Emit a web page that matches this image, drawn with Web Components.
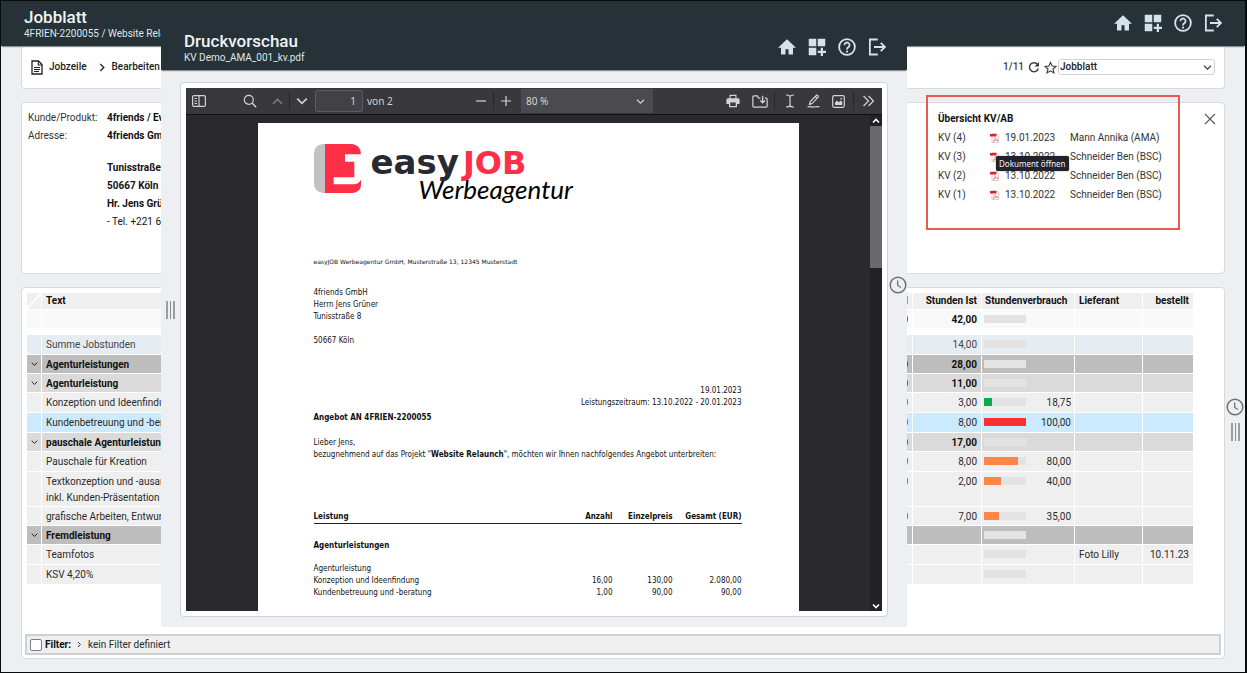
<!DOCTYPE html>
<html lang="de">
<head>
<meta charset="utf-8">
<meta name="viewport" content="width=device-width, initial-scale=1">
<title>Jobblatt – Druckvorschau</title>
<style>
  body { margin: 0; font: 10px/16px Roboto, "Liberation Sans", sans-serif; color: #2b2b2b; background: #edeff2; }
</style>
</head>
<body>
<app-frame>
  <app-header slot="header" heading="Jobblatt" subline="4FRIEN-2200055 / Website Relaunch"></app-header>
  <ui-card class="top"><job-toolbar></job-toolbar></ui-card>
  <ui-card class="info"><customer-info></customer-info><kv-overview></kv-overview></ui-card>
  <ui-card class="grow"><job-table></job-table><filter-bar></filter-bar></ui-card>
  <preview-dialog slot="dialog"></preview-dialog>
</app-frame>

<script>
/* Registers an element whose shadow root is cloned from a template. */
function define(name, css, html) {
  const tpl = document.createElement('template');
  tpl.innerHTML = `<style>*{box-sizing:border-box}button{border:0;background:none;padding:0;margin:0;color:inherit;font:inherit;display:grid;place-items:center}${css}</style>`;
  customElements.define(name, class extends HTMLElement {
    constructor() {
      super();
      const root = this.attachShadow({ mode: 'open' });
      root.append(tpl.content.cloneNode(true));
      const body = document.createElement('template');
      body.innerHTML = typeof html === 'function' ? html(this) : html;
      root.append(body.content);
    }
  });
}

const line = 'fill="none" stroke="currentColor"';
const ICONS = {
  home: ['0 0 24 24', '<path fill="currentColor" d="M10 22v-7h4v7h6v-9h4L12 1.500 0 13h4v9z"/>'],
  apps: ['0 0 24 24', '<path fill="currentColor" d="M1 1h10v10H1zM13 1h10v10H13zM1 13h10v10H1zM17 13h3v4h4v3h-4v4h-3v-4h-4v-3h4z"/>'],
  help: ['0 0 24 24', `<circle cx="12" cy="12" r="10.500" ${line} stroke-width="2.400"/><path ${line} stroke-width="2.400" d="M8.600 9.500a3.400 3.400 0 1 1 5.400 2.700c-1.300 1-2 1.400-2 3"/><circle cx="12" cy="18" r="1.500" fill="currentColor"/>`],
  exit: ['0 0 24 24', `<path ${line} stroke-width="2.400" d="M13 2H2.500v20H13M8 12h14M17 6.500l5.500 5.500-5.500 5.500"/>`],
  doc: ['0 0 12 15', `<path ${line} stroke-width="1.300" d="M1 1h6.500L11 4.500V14H1z"/><path ${line} stroke-width="1.100" d="M7.300 1v4H11M3 7.500h6M3 9.500h6M3 11.500h5"/>`],
  right: ['0 0 8 10', `<path ${line} stroke-width="1.500" d="M1.500 1l4 4-4 4"/>`],
  down: ['0 0 10 8', `<path ${line} stroke-width="1.300" d="M1 2l4 4 4-4"/>`],
  up: ['0 0 10 8', `<path ${line} stroke-width="1.300" d="M1 6l4-4 4 4"/>`],
  downBold: ['0 0 10 8', `<path ${line} stroke-width="2.200" d="M1 2l4 4 4-4"/>`],
  upBold: ['0 0 10 8', `<path ${line} stroke-width="2.200" d="M1 6l4-4 4 4"/>`],
  reload: ['0 0 12 12', `<path ${line} stroke-width="1.400" d="M9.800 3.800A4.500 4.500 0 1 0 10.300 7.500"/><path fill="currentColor" d="M11 1v4.500H6.500z"/>`],
  star: ['0 0 14 14', `<path ${line} stroke-width="1.200" d="M7 1.500l1.700 3.900 4.200.4-3.200 2.800 1 4.200L7 10.600l-3.700 2.200 1-4.200L1.100 5.800l4.200-.4z"/>`],
  close: ['0 0 12 12', `<path ${line} stroke-width="1.100" d="M1 1l10 10M11 1L1 11"/>`],
  clock: ['0 0 18 18', `<circle cx="9" cy="9" r="7.800" ${line} stroke-width="1.500"/><path ${line} stroke-width="1.300" d="M8.700 4.500V9.500L12 11.500"/>`],
  pdf: ['0 0 9 10', '<path fill="#fff" stroke="#e3bcbc" stroke-width=".8" d="M2 .5h4.500l2 2v7H2z"/><path fill="#d22630" d="M0 1h6.500v2.500H0z"/><path fill="none" stroke="#df7b80" stroke-width=".8" d="M3 8.500c1.500-1 2-2.500 2-4 .3 1.600 1.500 2.500 3 2.700-1.700 0-3.500.3-5 1.300z"/>'],
  sidebar: ['0 0 14 12', `<rect x=".6" y=".6" width="12.800" height="10.800" rx="1.500" ${line} stroke-width="1.200"/><path ${line} stroke-width="1.200" d="M7 1v10M2.500 3.500H5M2.500 6H5M2.500 8.500H5"/>`],
  search: ['0 0 14 14', `<circle cx="5.800" cy="5.800" r="4.500" ${line} stroke-width="1.200"/><path ${line} stroke-width="1.300" d="M9 9l4.200 4.200"/>`],
  minus: ['0 0 12 12', `<path ${line} stroke-width="1.200" d="M1 6h10"/>`],
  plus: ['0 0 12 12', `<path ${line} stroke-width="1.200" d="M1 6h10M6 1v10"/>`],
  print: ['0 0 14 14', '<path fill="currentColor" fill-rule="evenodd" d="M3.500.8h7v3.400H12a1.600 1.600 0 0 1 1.600 1.600V10H11v3.200H3V10H.4V5.800A1.600 1.600 0 0 1 2 4.200h1.500zM4.600 2v2.200h4.800V2zM4.300 8.600v3.300h5.400V8.600z"/>'],
  save: ['0 0 15 12', `<path ${line} stroke-width="1.100" d="M8 2.800H6.200L5 .8H1.800a1 1 0 0 0-1 1v8.400a1 1 0 0 0 1 1h11.400a1 1 0 0 0 1-1V3.800a1 1 0 0 0-1-1H12"/><path ${line} stroke-width="1.200" d="M10 .5v6.700M7.800 5l2.200 2.200L12.200 5"/>`],
  text: ['0 0 10 14', `<path ${line} stroke-width="1.200" d="M1 1c2.500 0 4 .3 4 2v8c0 1.700-1.500 2-4 2M9 1C6.500 1 5 1.300 5 3v8c0 1.700 1.500 2 4 2"/>`],
  pen: ['0 0 14 14', `<path ${line} stroke-width="1.200" d="M2.500 10.500l.8-3L9.500 1.300c.8-.7 2.500 1 1.700 1.800L5 9.600zM8.300 2.500l1.800 1.800M.5 13c3-1 4 .4 6 0s3-.6 6-.2"/>`],
  image: ['0 0 13 13', `<rect x=".7" y=".7" width="11.600" height="11.600" rx="1.500" ${line} stroke-width="1.200"/><path fill="currentColor" d="M3 10V7.500l2-2 1.800 1.700L9 5.500l1.300 1.500V10zM8.500 3h1.500v1.500H8.500z"/>`],
  more: ['0 0 13 12', `<path ${line} stroke-width="1.200" d="M1.500 1l5 5-5 5M6.500 1l5 5-5 5"/>`]
};
const icon = (name, w, h = w) => `<svg width="${w}" height="${h}" viewBox="${ICONS[name][0]}" aria-hidden="true" style="display:block;flex:none">${ICONS[name][1]}</svg>`;

define('app-frame', `
  :host { display: flex; flex-direction: column; min-height: 100vh; position: relative; box-sizing: border-box;
    border: 1px solid #0a0b0d; border-right-width: 2px; background: #edeff2; overflow: hidden; }
  .row { flex: 1; display: flex; }
  main { flex: 1; min-width: 0; display: flex; flex-direction: column; gap: 13px; padding: 0 0 13px 20px; }
  ::slotted([slot=dialog]) { position: absolute; top: 24px; left: 160px; right: 338px; bottom: 45px; }`,
  `<slot name="header"></slot>
   <div class="row"><main><slot></slot></main><side-rail style="padding-top:352px" clock grip></side-rail></div>
   <slot name="dialog"></slot>`);

define('side-rail', `
  :host { display: flex; flex: none; flex-direction: column; align-items: center; gap: 7px; width: 20px; color: #6f7176; box-sizing: border-box; }
  .grip { width: 9px; height: 18px; border: solid #9a9ca0; border-width: 0 2px; display: grid; justify-content: center; }
  .grip i { width: 1px; background: #8b8d91; }`,
  el => (el.hasAttribute('clock') ? `<button type="button" aria-label="Zeiterfassung">${icon('clock', 18)}</button>` : '') +
        (el.hasAttribute('grip') ? '<div class="grip"><i></i></div>' : ''));

define('app-header', `
  :host { display: flex; flex: none; height: 45px; box-sizing: border-box; padding: 6px 20px 0 23px; justify-content: space-between;
    background: #263238; color: #eef3f5; box-shadow: 0 2px 1px -1px #8a8d90; position: relative; z-index: 1; }
  h1 { margin: 0; font-size: 17px; line-height: 20px; font-weight: 500; }
  p { margin: 0; font-size: 10px; line-height: 14px; white-space: nowrap; color: #dfe6e9; }
  nav { display: flex; gap: 6px; height: 32px; align-items: center; color: #d5e2ea; }
  nav button { width: 24px; height: 24px; }`,
  el => `<div><h1>${el.getAttribute('heading')}</h1><p>${el.getAttribute('subline')}</p></div>
   <nav><button type="button" aria-label="Start">${icon('home', 18)}</button><button type="button" aria-label="Apps">${icon('apps', 18)}</button>
   <button type="button" aria-label="Hilfe">${icon('help', 18)}</button><button type="button" aria-label="Abmelden">${icon('exit', 18)}</button></nav>`);

define('ui-card', `
  :host { display: flex; flex: none; box-sizing: border-box; background: #fff; border: 1px solid #d8dadd; border-radius: 4px; }
  :host(.top) { border-top: 0; border-radius: 0 0 4px 4px; height: 43px; align-items: center; }
  :host(.info) { min-height: 172px; justify-content: space-between; }
  :host(.grow) { flex: 1; flex-direction: column; justify-content: space-between; padding: 3px; }
  ::slotted(job-toolbar) { flex: 1; }`, '<slot></slot>');

define('job-toolbar', `
  :host { display: flex; justify-content: space-between; align-items: center; padding: 0 9px; font-weight: 500; }
  div { display: flex; align-items: center; }
  a { display: flex; align-items: center; gap: 6px; color: #222; text-decoration: none; }
  .right { gap: 1px; color: #37393c; }
  .state { gap: 4px; }
  .pick { position: relative; }
  .pick svg { position: absolute; right: 3px; top: 5px; pointer-events: none; }
  select { appearance: none; display: block; width: 157px; height: 16px; border: 1px solid #cfd1d4; border-radius: 3px; background: #fff; color: #222; font: inherit; line-height: 14px; padding: 0 1px; }`,
  `<div style="gap:12px"><a href="#jobzeile">${icon('doc', 12, 15)}Jobzeile</a><a href="#bearbeiten">${icon('right', 7, 9)}Bearbeiten</a></div>
   <div class="right"><div class="state"><span>1/11</span><button type="button" aria-label="Neu laden">${icon('reload', 12)}</button>
   <button type="button" aria-label="Favorit">${icon('star', 13)}</button></div>
   <span class="pick"><select aria-label="Ansicht"><option>Jobblatt</option></select>${icon('down', 9, 7)}</span></div>`);

define('customer-info', `
  :host { display: block; padding: 6px; }
  dl { display: grid; grid-template-columns: 79px auto; margin: 0; line-height: 18px; white-space: nowrap; }
  dt { color: #333; } dd { margin: 0; font-weight: 700; color: #111; }
  p { margin: 0; } .addr { padding-top: 14px; grid-column: 2; } .tel { font-weight: 400; }`,
  `<dl><dt>Kunde/Produkt:</dt><dd>4friends / Event</dd><dt>Adresse:</dt><dd>4friends GmbH</dd>
   <dd class="addr"><p>Tunisstraße 8</p><p>50667 Köln</p><p>Hr. Jens Grüner</p><p class="tel">- Tel. +221 6</p></dd></dl>`);

define('kv-overview', `
  :host { display: flex; align-items: flex-start; gap: 24px; padding: 6px 8px 0 0; color: #333; }
  section { position: relative; width: 254px; padding-left: 12px; }
  .mark { position: absolute; left: 0; right: 0; top: -14px; height: 135px; border: 2px solid #ea5a50; pointer-events: none; }
  h2 { margin: 0; font-size: 10px; line-height: 19px; font-weight: 700; color: #111; }
  table { border-spacing: 0; table-layout: fixed; width: 100%; }
  td { padding: 0; height: 19px; line-height: 19px; white-space: nowrap; }
  .tip { position: absolute; left: 70px; top: 47px; padding: 0 3px; background: #23212b; color: #f0f0f2; border-radius: 2px; font: 8px/15px "Noto Sans", sans-serif; white-space: nowrap; box-shadow: 0 0 1px #000; }
  .x { width: 12px; height: 20px; color: #55585c; }`,
  `<section><div class="mark"></div><h2>Übersicht KV/AB</h2>
   <table><colgroup><col style="width:52px"><col style="width:15px"><col style="width:65px"><col></colgroup><tbody>` +
   [['KV (4)', '19.01.2023', 'Mann Annika (AMA)'], ['KV (3)', '13.10.2022', 'Schneider Ben (BSC)'], ['KV (2)', '13.10.2022', 'Schneider Ben (BSC)'], ['KV (1)', '13.10.2022', 'Schneider Ben (BSC)']]
     .map(r => `<tr><td>${r[0]}</td><td><button type="button" aria-label="Dokument öffnen">${icon('pdf', 9, 10)}</button></td><td>${r[1]}</td><td>${r[2]}</td></tr>`).join('') +
   `</tbody></table><div class="tip" role="tooltip">Dokument öffnen</div></section>
   <button class="x" type="button" aria-label="Schließen">${icon('close', 12)}</button>`);

/* kind, text, planned hours, actual hours, usage share, bar colour, supplier, ordered */
const JOB_ROWS = [
  ['sum', 'Summe Jobstunden', '', '14,00'],
  ['dark', 'Agenturleistungen', '42,00', '28,00'],
  ['mid', 'Agenturleistung', '24,00', '11,00'],
  ['tall', 'Konzeption und Ideenfindung', '16,00', '3,00', '18,75', '#0bab52'],
  ['sel', 'Kundenbetreuung und -beratung', '8,00', '8,00', '100,00', '#fb3033'],
  ['mid', 'pauschale Agenturleistungen', '20,00', '17,00'],
  ['tall', 'Pauschale für Kreation', '10,00', '8,00', '80,00', '#ff8649'],
  ['', 'Textkonzeption und -ausarbeitung<br>inkl. Kunden-Präsentation', '5,00', '2,00', '40,00', '#ff8649'],
  ['', 'grafische Arbeiten, Entwurf', '20,00', '7,00', '35,00', '#ff8649'],
  ['dark', 'Fremdleistung', '', ''],
  ['tall', 'Teamfotos', '', '', '', '', 'Foto Lilly', '10.11.23'],
  ['tall', 'KSV 4,20%', '', '']
];
const usage = (pct = '', color = '') => `<div class="use"><span class="bar"><i style="width:${parseFloat(pct) || 0}%;background:${color}"></i></span>${pct}</div>`;

define('job-table', `
  :host { display: block; padding: 2px 28px 0 2px; }
  table { width: 100%; table-layout: fixed; border-spacing: 0; }
  td, th { border: solid #fff; border-width: 0 1px 1px 0; padding: 2px 4px 0; line-height: 16px; vertical-align: top; background: var(--row, #efefef); white-space: nowrap; overflow: hidden; }
  th { padding-top: 0; line-height: 16px; color: #111; font-weight: 700; text-align: left; }
  td:first-child, th:first-child { padding: 0; }
  td:last-child, th:last-child { border-right: 0; }
  .n { text-align: right; }
  .u { padding-left: 2px; padding-right: 3px; } th.u { padding-left: 3px; }
  .total { --row: #f9f9f9; font-weight: 700; color: #111; }
  .gap td { background: none; height: 6px; padding: 0; border: 0; line-height: 0; }
  .dark { --row: #bdbdbd; font-weight: 700; color: #111; }
  .mid { --row: #dadada; font-weight: 700; color: #111; }
  .sum { --row: #e5ecf2; color: #444; } .sel { --row: #cbeafd; }
  .sum td, .sel td, .tall td { height: 20px; }
  td button { width: 14px; height: 18px; }
  .use { display: flex; justify-content: space-between; }
  .bar { width: 42px; height: 8px; margin-top: 3px; background: #e3e3e3; }
  .bar i { display: block; height: 8px; }
  .corner { background: linear-gradient(135deg, #f0f0f0 46%, #fff 47%, #fff 53%, #f0f0f0 54%); }`,
  `<table><colgroup><col style="width:15px"><col><col style="width:80px"><col style="width:69px"><col style="width:93px"><col style="width:68px"><col style="width:50px"></colgroup>
   <thead><tr><th class="corner"></th><th>Text</th><th class="n">Stunden Soll</th><th class="n">Stunden Ist</th><th class="u">Stundenverbrauch</th><th>Lieferant</th><th class="n">bestellt</th></tr></thead>
   <tbody><tr class="total"><td></td><td></td><td class="n">80,00</td><td class="n">42,00</td><td class="u">${usage()}</td><td></td><td></td></tr>
   <tr class="gap"><td colspan="7"></td></tr>` +
   JOB_ROWS.map(([kind, text, plan, ist, pct, color, sup = '', ord = '']) =>
     `<tr class="${kind}"><td>${kind === 'dark' || kind === 'mid' ? `<button type="button" aria-label="Zuklappen">${icon('down', 7, 6)}</button>` : ''}</td>
      <td>${text}</td><td class="n">${plan}</td><td class="n">${ist}</td><td class="u">${usage(pct, color)}</td><td>${sup}</td><td class="n">${ord}</td></tr>`).join('') +
   '</tbody></table>');

define('filter-bar', `
  :host { display: flex; align-items: center; gap: 6px; height: 21px; box-sizing: border-box; border: 2px solid #cfd0d2; background: #efefef; padding: 0 3px; }
  label { display: flex; align-items: center; gap: 3px; font-weight: 700; color: #111; }
  input { appearance: none; width: 12px; height: 12px; margin: 0; border: 1px solid #7b7d88; border-radius: 2px; background: #fff; }`,
  `<label><input type="checkbox">Filter:</label>${icon('right', 5, 7)}<span>kein Filter definiert</span>`);

define('preview-dialog', `
  :host { display: flex; flex-direction: column; background: #edeff2; z-index: 2; }
  .row { flex: 1; min-height: 0; display: flex; }
  app-header { padding-right: 18px; }
  .card { flex: 1; min-width: 0; display: flex; flex-direction: column; margin: 12px 0 10px; padding: 5px; border: 1px solid #cfd1d5; border-radius: 4px; background: #fff; }
  .view { flex: 1; min-height: 0; display: flex; background: #2a2a2e; }
  .page { flex: 1; display: flex; justify-content: center; padding-top: 8px; overflow: hidden; }
  .scroll { width: 12px; display: flex; flex-direction: column; align-items: center; background: #222226; color: #fff; }
  .thumb { width: 12px; height: 142px; margin-bottom: auto; background: #6a6a6d; }
  .scroll button { height: 11px; }`,
  `<app-header heading="Druckvorschau" subline="KV Demo_AMA_001_kv.pdf"></app-header>
   <div class="row"><side-rail style="width:19px;padding-top:231px" grip></side-rail>
   <div class="card"><pdf-toolbar></pdf-toolbar><div class="view"><div class="page"><quote-page></quote-page></div>
   <div class="scroll"><button type="button" aria-label="Nach oben">${icon('upBold', 8, 6)}</button><div class="thumb"></div><button type="button" aria-label="Nach unten">${icon('downBold', 8, 6)}</button></div></div></div>
   <side-rail style="width:19px;padding-top:206px" clock></side-rail></div>`);

define('pdf-toolbar', `
  :host { display: flex; flex: none; height: 27px; box-sizing: border-box; align-items: center; padding: 0 2px 0 1px; background: #38383d; border-bottom: 1px solid #111114; color: #d4d4d8; font: 10px/16px "Noto Sans", sans-serif; }
  .g { display: flex; align-items: center; } .c { margin-left: auto; } .r { margin-left: 68px; }
  .g > button { width: 24px; height: 24px; }
  hr { width: 1px; height: 18px; margin: 0; border: 0; background: #27272b; }
  .dim { color: #808085; }
  input { width: 48px; height: 22px; border: 1px solid #5b5b60; border-radius: 2px; background: #414146; color: inherit; font: inherit; text-align: right; padding: 0 6px; margin: 0 4px 0 1px; }
  .pick { position: relative; margin-left: 3px; } .pick svg { position: absolute; right: 8px; top: 9px; pointer-events: none; }
  select { appearance: none; display: block; width: 132px; height: 24px; border: 0; background: #4a4a4f; color: inherit; font: inherit; padding: 0 5px; }`,
  (() => { const b = (n, l, w, h, k = '') => `<button type="button" class="${k}" aria-label="${l}">${icon(n, w, h)}</button>`;
    return `<div class="g">${b('sidebar', 'Seitenleiste', 14, 12)}<div style="width:27px"></div>${b('search', 'Suchen', 14, 14)}<div style="width:3px"></div>${b('up', 'Vorherige Seite', 11, 9, 'dim')}<hr>${b('down', 'Nächste Seite', 12, 10)}
    <input type="text" value="1" aria-label="Seite"><span>von 2</span></div>
    <div class="g c">${b('minus', 'Verkleinern', 12)}<hr>${b('plus', 'Vergrößern', 12)}<span class="pick"><select aria-label="Zoom"><option>80 %</option></select>${icon('down', 9, 7)}</span></div>
    <div class="g r">${b('print', 'Drucken', 14)}<div style="width:3px"></div>${b('save', 'Speichern', 16, 13)}<hr style="margin:0 3px 0 2px">${b('text', 'Text', 10, 14)}${b('pen', 'Zeichnen', 14)}${b('image', 'Bild', 13)}<hr style="margin:0 2px 0 3px">${b('more', 'Mehr', 13, 12)}</div>`; })());

define('quote-page', `
  :host { display: block; flex: none; width: 541px; box-sizing: border-box; padding: 21px 57px 0 56px; background: #fff; color: #111; font: 8px/12px "DejaVu Sans Condensed", "DejaVu Sans", sans-serif; }
  p { margin: 0; }
  .logo { display: flex; gap: 10px; height: 62px; position: relative; }
  .word { display: flex; align-items: baseline; gap: 4px; height: 40px; font-family: "DejaVu Sans", sans-serif; font-weight: 700; line-height: 36px; font-size: 34px; color: #272933; }
  .word b { font-size: 32px; color: #ff2f48; }
  .hand { position: absolute; left: 105px; top: 29px; font: italic 26px/32px Lato, sans-serif; color: #000; }
  .from { margin-top: 50px; font: 6px/12px "DejaVu Sans", sans-serif; }
  .to { margin-top: 19px; }
  .date { margin-top: 38px; text-align: right; }
  h2 { margin: 3px 0 13px; font-size: 8px; line-height: 12px; }
  table { width: 100%; margin-top: 50px; border-spacing: 0; table-layout: fixed; }
  td, th { padding: 0; text-align: right; white-space: nowrap; } td:first-child, th:first-child { text-align: left; }
  thead th { border-bottom: 1px solid #222; }
  .grp th { padding: 16px 0 11px; }`,
  `<div class="logo"><svg width="47" height="49" viewBox="0 0 141 147" aria-hidden="true"><path fill="#c2c2c4" d="M33 0v147H26Q0 143 0 118V29Q0 4 26 0z"/><path fill="#ff2f48" d="M33 0h82q26 4 26 31H93v22h28v47H59v21h60q16-2 22-14v15q0 21-24 25H33z"/></svg>
   <div class="word"><span>easy</span><b>JOB</b></div><span class="hand">Werbeagentur</span></div>
   <p class="from">easyJOB Werbeagentur GmbH, Musterstraße 13, 12345 Musterstadt</p>
   <p class="to">4friends GmbH<br>Herrn Jens Grüner<br>Tunisstraße 8<br><br>50667 Köln</p>
   <p class="date">19.01.2023<br>Leistungszeitraum: 13.10.2022 - 20.01.2023</p>
   <h2>Angebot AN 4FRIEN-2200055</h2>
   <p>Lieber Jens,<br>bezugnehmend auf das Projekt "<b>Website Relaunch</b>", möchten wir Ihnen nachfolgendes Angebot unterbreiten:</p>
   <table><colgroup><col><col style="width:60px"><col style="width:60px"><col style="width:69px"></colgroup>
   <thead><tr><th>Leistung</th><th>Anzahl</th><th>Einzelpreis</th><th>Gesamt (EUR)</th></tr></thead>
   <tbody><tr class="grp"><th colspan="4">Agenturleistungen</th></tr><tr><td colspan="4">Agenturleistung</td></tr>
   <tr><td>Konzeption und Ideenfindung</td><td>16,00</td><td>130,00</td><td>2.080,00</td></tr>
   <tr><td>Kundenbetreuung und -beratung</td><td>1,00</td><td>90,00</td><td>90,00</td></tr></tbody></table>`);
</script>
</body>
</html>
